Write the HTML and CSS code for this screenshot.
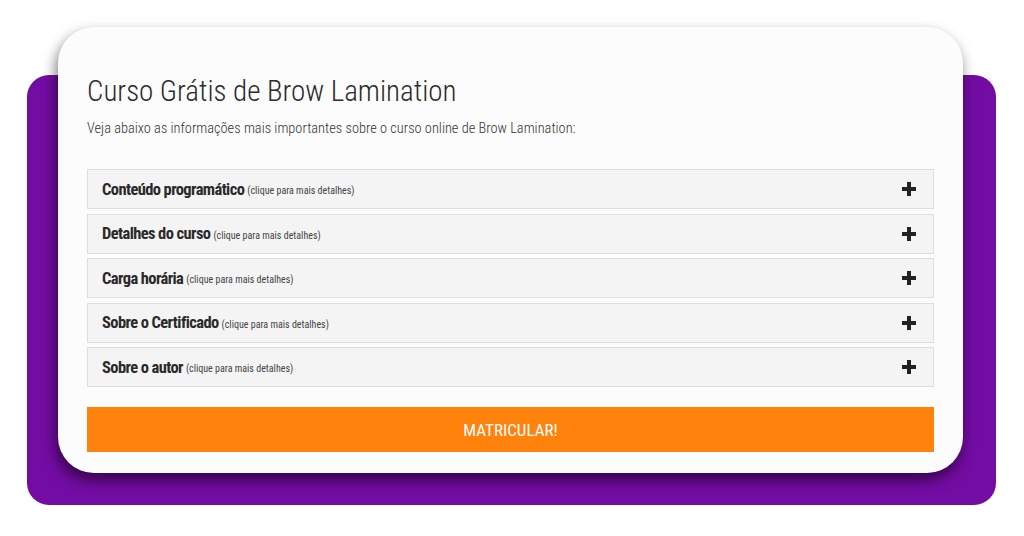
FILE: index.html
```html
<!DOCTYPE html>
<html lang="pt">
<head>
<meta charset="utf-8">
<link rel="stylesheet" href="styles.css">
</head>
<body>
<div class="stage">
  <div class="purple">
    <div class="card">
      <h1 class="title">Curso Grátis de Brow Lamination</h1>
      <p class="sub">Veja abaixo as informações mais importantes sobre o curso online de Brow Lamination:</p>
      <div class="list">
        <div class="item"><span class="name">Conteúdo programático</span><span class="hint">(clique para mais detalhes)</span><span class="plus"></span></div>
        <div class="item"><span class="name">Detalhes do curso</span><span class="hint">(clique para mais detalhes)</span><span class="plus"></span></div>
        <div class="item"><span class="name">Carga horária</span><span class="hint">(clique para mais detalhes)</span><span class="plus"></span></div>
        <div class="item"><span class="name">Sobre o Certificado</span><span class="hint">(clique para mais detalhes)</span><span class="plus"></span></div>
        <div class="item"><span class="name">Sobre o autor</span><span class="hint">(clique para mais detalhes)</span><span class="plus"></span></div>
      </div>
      <div class="btn">MATRICULAR!</div>
    </div>
  </div>
</div>
</body>
</html>
```
FILE: styles.css
```css
* { box-sizing: border-box; }
html, body { margin: 0; padding: 0; background: #fff; }
body {
  width: 1024px; height: 536px; overflow: hidden;
  font-family: "Roboto Condensed", "Liberation Sans Narrow", "DejaVu Sans Condensed", Roboto, sans-serif;
}
.stage { padding: 75px 28px 0 27px; }
.purple {
  width: 969px; height: 430px;
  background: #730ca3;
  border-radius: 22px;
  padding-left: 31px;
}
.card {
  position: relative;
  width: 905px; height: 446px;
  margin-top: -48px;
  float: left;
  background: #fcfcfc;
  border-radius: 36px;
  box-shadow: -2px 7px 14px rgba(0,0,0,0.55);
  padding: 40px 29px 0 29px;
}
.title {
  margin: 0;
  font-weight: 300;
  font-size: 29px;
  line-height: 48px;
  color: #2b2b2b;
}
.sub {
  margin: 4px 0 0 0;
  font-size: 14.4px;
  line-height: 20px;
  color: #333;
  font-weight: 300;
}
.list { margin-top: 30px; display: flex; flex-direction: column; gap: 4.5px; }
.item {
  height: 40px;
  background: #f4f4f4;
  border: 1px solid #dedede;
  display: flex; align-items: center;
  padding: 0 15px 0 14px;
}
.name { font-size: 16.5px; font-weight: 700; color: #2a2a2a; letter-spacing: -0.6px; }
.hint { font-size: 10px; color: #444; margin-left: 3px; margin-top: 3px; }
.plus {
  margin-left: auto;
  width: 14px; height: 14px; position: relative; margin-right: 2px;
}
.plus::before, .plus::after {
  content: ""; position: absolute; background: #222;
}
.plus::before { left: 0; top: 5px; width: 14px; height: 4px; }
.plus::after { left: 5px; top: 0; width: 4px; height: 14px; }
.btn {
  margin-top: 20px;
  height: 45px;
  background: #ff820c;
  color: #fff;
  font-size: 17px;
  display: flex; align-items: center; justify-content: center;
  font-weight: 400;
}
```
